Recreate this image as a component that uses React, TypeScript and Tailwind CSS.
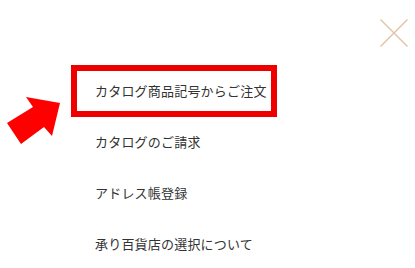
import React from "react";

const items = [
  "カタログ商品記号からご注文",
  "カタログのご請求",
  "アドレス帳登録",
  "承り百貨店の選択について",
];

export default function App() {
  return (
    <div
      className="relative w-[415px] h-[268px] bg-white overflow-hidden"
      style={{ fontFamily: '"Noto Sans CJK JP", "Noto Sans", sans-serif' }}
    >
      <header className="flex justify-end pt-[19px] pr-[7px]">
        <button aria-label="閉じる" className="w-[28px] h-[28px] block">
          <svg width="28" height="28" viewBox="0 0 28 28">
            <path d="M0.5 0.5 L27.5 27.5 M27.5 0.5 L0.5 27.5" stroke="#e2c2a4" strokeWidth="1.4" fill="none" />
          </svg>
        </button>
      </header>
      <nav className="mt-[24px] pl-[77px]">
        <ul className="flex flex-col gap-[11px]">
          {items.map((t, i) => (
            <li
              key={t}
              className={
                "w-[194px] h-[40px] flex items-center pl-[18px] text-[13px] tracking-[0.2px] text-[#333333] " +
                (i === 0 ? "outline-[6px] outline-solid outline-[#ee0000]" : "")
              }
            >
              {t}
            </li>
          ))}
        </ul>
      </nav>
      <svg className="absolute left-0 top-0" width="80" height="160" viewBox="0 0 80 160">
        <polygon
          points="60,103 26,97 33,107 7,123 21,144 44,127 52,136"
          fill="#ff0000"
        />
      </svg>
    </div>
  );
}
